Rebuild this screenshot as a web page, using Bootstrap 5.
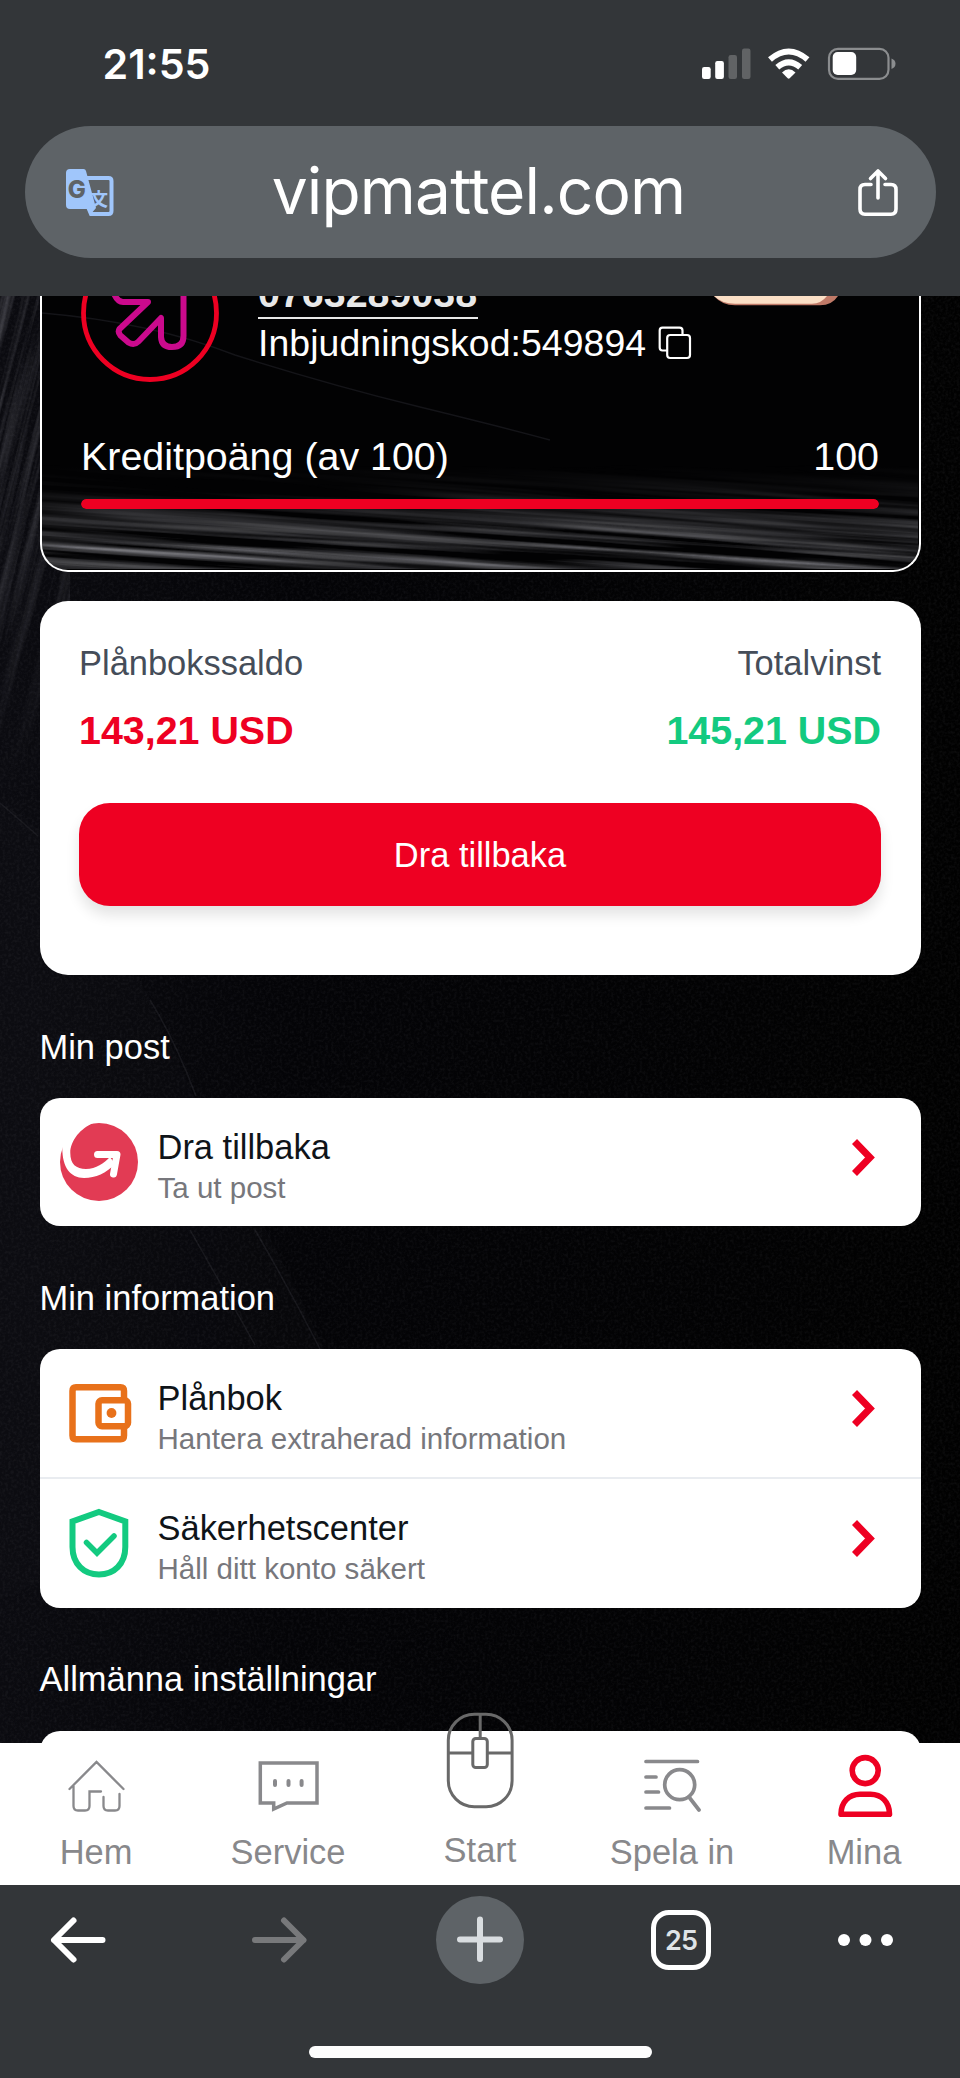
<!DOCTYPE html>
<html lang="sv">
<head>
<meta charset="utf-8">
<meta name="viewport" content="width=device-width, initial-scale=1">
<title>Mina</title>
<link href="https://cdn.jsdelivr.net/npm/bootstrap@5.3.0/dist/css/bootstrap.min.css" rel="stylesheet">
<style>
  :root { --red: #ee0022; --green: #13ca80; --chrome: #333639; --pill: #5e6367; }
  body { width: 960px; height: 2078px; overflow: hidden; background: #020204; font-family: "Liberation Sans", Arial, sans-serif; font-size: 34.46px; }
  svg { display: block; flex: none; }
  .browser-top { height: 296px; background: var(--chrome); font-family: Inter, sans-serif; color: #fff; }
  .status { height: 126px; padding: 44px 64px 0 102.5px; }
  .clock { font-size: 41.2px; line-height: 40px; font-weight: 600; }
  .signals { margin-top: 2px; }
  .url-pill { height: 132px; margin: 0 24.5px; padding: 0 33.5px 0 39.5px; background: var(--pill); border-radius: 66px; }
  .url-text { font-size: 64px; line-height: 80px; letter-spacing: -.85px; padding-bottom: 2px; margin-right: 13px; }
  .page { height: 1447px; padding: 0 39.5px; overflow: hidden; }
  .backdrop { left: 0; top: 0; }
  .profile { height: 275.5px; border: 2.5px solid #fff; border-top: 0; border-radius: 0 0 28px 28px; padding: 0 39.5px; background: #020203; overflow: hidden; color: #fff; }
  .phone { font-size: 39.4px; line-height: 44px; font-weight: 700; margin-top: -25px; padding-bottom: 2px; border-bottom: 2.5px solid #e8e8e8; color: #e8e8e8; width: 220px; }
  .invite { font-size: 37.4px; line-height: 46px; letter-spacing: .07px; padding-top: 1px; }
  .credit { font-size: 39.4px; line-height: 50px; margin-top: 49px; }
  .credit-bar { height: 10px; margin-top: 18px; border-radius: 5px; background: transparent; }
  .credit-bar .progress-bar { background: var(--red); border-radius: 5px; }
  .panel { background: #fff; border: 0; border-radius: 28px; }
  .balance { height: 374px; margin-top: 29.5px; padding: 36.5px 39.5px 0; color: #454d59; line-height: 50px; }
  .amount { font-size: 39.4px; line-height: 50px; font-weight: 700; margin-top: 17px; }
  .btn-draw { height: 103px; margin-top: 48px; padding-top: 9px; border: 0; border-radius: 31px; background: var(--red); color: #fff; font-size: 34.46px; box-shadow: 0 9px 14px rgba(0,0,0,.11); }
  .section-title { color: #fff; font-size: 34.46px; line-height: 50px; font-weight: 400; margin: 46.5px 0 26.5px; }
  .menu-list { border-radius: 20px; overflow: hidden; }
  .menu-row { height: 128px; padding: 0 45px 0 20px; gap: 20px; color: #0f1419; }
  .menu-row + .menu-row { border-top: 2.5px solid #e9ecf0; height: 130.5px; }
  .menu-row .name { line-height: 40px; padding-top: 10px; }
  .menu-row .hint { line-height: 40px; font-size: 29.54px; color: #77777c; padding-top: 1px; }
  .tabs { height: 142px; background: #fff; color: #88888b; z-index: 2; }
  .tabs .tab { width: 192px; line-height: 40px; padding-top: 7px; }
  .tabs .tab span { margin-top: 11.5px; }
  .tabs .tab-start { padding-top: 0; margin-top: -35px; }
  .tabs .tab-start span { margin-top: 9.5px; }
  .browser-bottom { height: 193px; background: var(--chrome); }
  .tools { padding: 11px 66px 0 34px; }
  .tool { width: 88px; height: 88px; }
  .count { width: 60px; height: 60px; border: 5.5px solid #fff; border-radius: 18px; color: #dfe3e6; font: 600 27px/1 Inter, sans-serif; letter-spacing: -.9px; padding-top: 1px; }
  .home-bar { width: 343px; height: 12px; border-radius: 6px; background: #fdfdfd; margin: 62px 308.5px 0; }
</style>
</head>
<body class="d-flex flex-column">

<header class="browser-top">
  <div class="status d-flex justify-content-between align-items-start">
    <div class="clock">21:55</div>
    <svg class="signals" width="194" height="36" viewBox="702 46 194 36">
      <g fill="#fff"><rect x="702" y="67" width="8.7" height="12" rx="2.2"/><rect x="715.2" y="61" width="8.7" height="18" rx="2.2"/></g>
      <g fill="#616365"><rect x="728.5" y="55" width="8.5" height="24" rx="2.2"/><rect x="742" y="48.5" width="8.500" height="30.5" rx="2.2"/></g>
      <g fill="none" stroke="#fff" stroke-width="6"><path d="M770 59.500Q788.700 43.500 807.500 59.500"/><path d="M777.300 67.300Q788.700 57.500 800.200 67.300"/></g>
      <path d="M782 72.500Q788.700 66 795.500 72.500L789.700 78.300Q788.700 79.200 787.700 78.300Z" fill="#fff"/>
      <rect x="829" y="48.800" width="59.500" height="30" rx="9" fill="none" stroke="#8b8d8f" stroke-width="2.200"/>
      <rect x="832.700" y="52" width="23.500" height="23" rx="5" fill="#fff"/>
      <path d="M891.500 58.500Q895.500 60 895.500 63.700T891.500 69Z" fill="#8b8d8f"/>
    </svg>
  </div>
  <div class="url-pill d-flex justify-content-between align-items-center">
    <svg width="52" height="54" viewBox="64 164 52 54">
      <path d="M86 177H108.500Q111.500 177 111.500 180V210Q111.500 213 108.500 213H91L88 206" fill="none" stroke="#a0c6fb" stroke-width="4"/>
      <text x="89.500" y="204.500" font-family="Noto Sans CJK JP, sans-serif" font-weight="700" font-size="18.500" fill="#a0c6fb">文</text>
      <path d="M70 168H83.500Q85.500 168 86 170L96 207L90 214L87.500 208H70Q66 208 66 204V172Q66 168 70 168Z" fill="#a0c6fb"/>
      <path d="M96 203.500L104 203" stroke="#a0c6fb" stroke-width="0"/>
      <text x="67.800" y="196.500" font-family="Inter, sans-serif" font-weight="800" font-size="24" fill="#5e6367">G</text>
    </svg>
    <div class="url-text">vipmattel.com</div>
    <svg width="48" height="54" viewBox="854 165 48 54" fill="none" stroke="#fff" stroke-width="3.600" stroke-linecap="round" stroke-linejoin="round">
      <path d="M871 184.500H865Q860 184.500 860 189.500V209Q860 214.200 865 214.200H891Q896 214.200 896 209V189.500Q896 184.500 891 184.500H885M878 198V172M870.500 178.500L878 171L885.500 178.500"/>
    </svg>
  </div>
</header>

<main class="page position-relative">
  <svg class="backdrop position-absolute" width="960" height="1447" viewBox="0 296 960 1447">
    <defs>
      <filter id="grain" x="0" y="0" width="100%" height="100%"><feTurbulence type="fractalNoise" baseFrequency=".35" numOctaves="2" seed="4"/><feColorMatrix values="0 0 0 0 .4  0 0 0 0 .4  0 0 0 0 .45  .3 0 0 0 -.12"/></filter>
      <filter id="strands" x="0" y="0" width="100%" height="100%"><feTurbulence type="fractalNoise" baseFrequency=".16 .004" numOctaves="3" seed="8"/><feColorMatrix values="0 0 0 0 .3  0 0 0 0 .3  0 0 0 0 .34  1.300 0 0 0 -.5"/></filter>
      <linearGradient id="shade" x1="0" x2="1"><stop offset="0" stop-color="#0b0b10"/><stop offset=".3" stop-color="#040407"/><stop offset="1" stop-color="#010101"/></linearGradient>
      <linearGradient id="fade" x1="0" x2="0" y1="0" y2="1"><stop offset="0" stop-color="#aaa"/><stop offset=".45" stop-color="#888"/><stop offset="1" stop-color="#000"/></linearGradient>
      <mask id="leftmask"><rect x="-100" y="200" width="170" height="600" fill="url(#fade)"/></mask>
    </defs>
    <rect y="296" width="960" height="1447" fill="url(#shade)"/>
    <g mask="url(#leftmask)"><rect x="-100" y="240" width="240" height="560" filter="url(#strands)" transform="rotate(14 20 500)"/></g>
    <path d="M0 803Q70 840 120 940Q175 1050 200 1110Q260 1210 330 1360Q240 1500 0 1600Z" fill="#14141a" opacity=".2"/>
    <path d="M0 803Q20 820 38 836M150 1000Q175 1040 196 1096M190 1230Q230 1300 255 1345M255 1230Q290 1290 320 1349" fill="none" stroke="#26262b" stroke-width="1.500" opacity=".5"/>
    <rect y="296" width="960" height="1447" filter="url(#grain)" opacity=".5"/>
  </svg>

  <section class="profile position-relative">
    <svg class="backdrop position-absolute" width="876" height="273" viewBox="42 296 876 273">
      <defs>
        <filter id="hair" x="0" y="0" width="100%" height="100%"><feTurbulence type="fractalNoise" baseFrequency=".0025 .13" numOctaves="3" seed="12"/><feColorMatrix values="0 0 0 0 .3  0 0 0 0 .3  0 0 0 0 .33  2.200 0 0 0 -.75"/></filter>
        <linearGradient id="rise" x1="0" x2="0" y1="0" y2="1"><stop offset="0" stop-color="#000"/><stop offset=".35" stop-color="#333"/><stop offset=".75" stop-color="#ccc"/><stop offset="1" stop-color="#999"/></linearGradient>
        <mask id="low"><rect x="0" y="465" width="960" height="110" fill="url(#rise)"/></mask>
      </defs>
      <g mask="url(#low)"><rect x="0" y="420" width="1000" height="220" filter="url(#hair)" transform="rotate(4 480 520)"/></g>
      <path d="M42 313Q150 322 235 355Q330 385 420 407T550 440" fill="none" stroke="#141418" stroke-width="1.500"/>
    </svg>
    <div class="position-relative">
      <div class="d-flex justify-content-between align-items-start">
        <div class="d-flex align-items-start">
          <svg width="138" height="86" viewBox="81 296 138 86" fill="none">
            <circle cx="150" cy="313" r="66.500" stroke="#ee0022" stroke-width="4.800"/>
            <path d="M112 288Q116 302 123 302H148L119.500 329Q117.500 332 120.500 335.500L128.500 342.500Q134 346 138.500 341.500L161 318V337Q161.500 347 172 347Q183.500 347 183.500 336V290" stroke="#cb0a8d" stroke-width="6" stroke-linejoin="round"/>
          </svg>
          <div style="margin-left:39px">
            <div class="phone">0763289038</div>
            <div class="invite d-flex align-items-center">Inbjudningskod:549894
              <svg width="38" height="34" viewBox="656 327 38 34" fill="none" stroke="#fff" stroke-width="2.200" style="margin-left:9px">
                <path d="M668 351.500H663.500Q660.700 351.500 660.700 348.500V331.500Q660.700 328.700 663.500 328.700H680.500Q683.500 328.700 683.500 331.500V335"/>
                <rect x="668.200" y="336" width="22.800" height="23" rx="3"/>
              </svg>
            </div>
          </div>
        </div>
        <svg width="165" height="12" viewBox="714 296 165 12">
          <path d="M714 296H838Q832 305.300 820 305.300H735Q722 305.300 714 296Z" fill="#c07a68"/>
          <path d="M714 296H827Q821 303.800 812 303.800H735Q722 303.800 714 296Z" fill="#fbdfc6"/>
        </svg>
      </div>
      <div class="credit d-flex justify-content-between"><span>Kreditpoäng (av 100)</span><span>100</span></div>
      <div class="progress credit-bar"><div class="progress-bar" style="width:100%"></div></div>
    </div>
  </section>

  <section class="card panel balance">
    <div class="d-flex justify-content-between">
      <div>Plånbokssaldo<div class="amount" style="color:var(--red)">143,21 USD</div></div>
      <div class="text-end">Totalvinst<div class="amount" style="color:var(--green)">145,21 USD</div></div>
    </div>
    <button class="btn btn-draw w-100" type="button">Dra tillbaka</button>
  </section>

  <h2 class="section-title position-relative">Min post</h2>
  <div class="card panel menu-list">
    <div class="menu-row d-flex align-items-center">
      <svg width="78" height="78" viewBox="0 0 78 78">
        <circle cx="39" cy="39" r="39" fill="#e23b54"/>
        <path d="M-2-2H40C25 1 10.300 15 10.300 30C10.300 41 16 46 26 46C36 46 44 40 50 34L55 41C46 50 36 55 24 55C10 55 2 44 2.300 24H-2Z" fill="#fff"/>
        <path d="M37.500 31.500H57L53.500 51" fill="none" stroke="#fff" stroke-width="7" stroke-linecap="round" stroke-linejoin="round"/>
      </svg>
      <div class="flex-grow-1"><div class="name">Dra tillbaka</div><div class="hint">Ta ut post</div></div>
      <svg width="24" height="128" viewBox="0 0 24 128"><path d="M2.500 43.500L18 59.500L2.500 75.500" fill="none" stroke="#ee0022" stroke-width="7"/></svg>
    </div>
  </div>

  <h2 class="section-title position-relative">Min information</h2>
  <div class="card panel menu-list">
    <div class="menu-row d-flex align-items-center">
      <svg width="78" height="78" viewBox="0 0 78 78" fill="none" stroke="#e8711a" stroke-width="6.500">
        <path d="M64 25V17Q64 13.200 60.500 13.200H16Q12.500 13.200 12.500 17V61.500Q12.500 65.200 16 65.200H60.500Q64 65.200 64 61.500V53"/>
        <rect x="38.500" y="26.200" width="29.500" height="26" rx="3.500"/>
        <circle cx="51.500" cy="39" r="4.900" fill="#e8711a" stroke="none"/>
      </svg>
      <div class="flex-grow-1"><div class="name">Plånbok</div><div class="hint">Hantera extraherad information</div></div>
      <svg width="24" height="128" viewBox="0 0 24 128"><path d="M2.500 43.500L18 59.500L2.500 75.500" fill="none" stroke="#ee0022" stroke-width="7"/></svg>
    </div>
    <div class="menu-row d-flex align-items-center">
      <svg width="78" height="78" viewBox="0 0 78 78" fill="none" stroke="#13ca80" stroke-width="6">
        <path d="M39 8L65.300 17.300V43C65.300 60 54 70.500 39 70.500S12.500 60 12.500 43V17.300Z"/>
        <path d="M26.500 38.500L37 49L54 32" stroke-width="5.500" stroke-linecap="round"/>
      </svg>
      <div class="flex-grow-1"><div class="name">Säkerhetscenter</div><div class="hint">Håll ditt konto säkert</div></div>
      <svg width="24" height="128" viewBox="0 0 24 128"><path d="M2.500 43.500L18 59.500L2.500 75.500" fill="none" stroke="#ee0022" stroke-width="7"/></svg>
    </div>
  </div>

  <h2 class="section-title position-relative">Allmänna inställningar</h2>
  <div class="card panel menu-list"><div class="menu-row"></div></div>
</main>

<nav class="tabs d-flex align-items-start position-relative">
  <div class="tab d-flex flex-column align-items-center">
    <svg width="72" height="70" viewBox="60 1750 72 70" fill="none" stroke="#89898c" stroke-width="2.300" stroke-linecap="round">
      <path d="M69.500 1789L96.500 1762L123.500 1789M73.500 1786V1806Q73.500 1810.500 78 1810.500H85Q89.500 1810.500 89.500 1806V1791.500H101M103.500 1797V1806Q103.500 1810.500 108 1810.500H115Q119.500 1810.500 119.500 1806V1794"/>
    </svg><span>Hem</span>
  </div>
  <div class="tab d-flex flex-column align-items-center">
    <svg width="72" height="70" viewBox="252 1750 72 70" fill="none" stroke="#89898c">
      <path d="M260.300 1763H317V1803H287L273.700 1809V1803H260.300Z" stroke-width="3.500"/>
      <path d="M275 1781V1785M288.500 1781V1785M301.600 1781V1785" stroke-width="4" stroke-linecap="round"/>
    </svg><span>Service</span>
  </div>
  <div class="tab tab-start d-flex flex-column align-items-center">
    <svg width="80" height="112" viewBox="440 1708 80 112" fill="none" stroke="#696969" stroke-width="3">
      <rect x="448.300" y="1714.300" width="63.800" height="92.500" rx="26"/>
      <rect x="472.800" y="1738.500" width="14.500" height="29" rx="3"/>
      <path d="M480.200 1714V1738M448 1753H472.500M487.500 1753H512"/>
    </svg><span>Start</span>
  </div>
  <div class="tab d-flex flex-column align-items-center">
    <svg width="72" height="70" viewBox="636 1750 72 70" fill="none" stroke="#89898c" stroke-width="3.700" stroke-linecap="round">
      <path d="M646 1761.500H697.500M646 1777H656M646 1792H658.500M646 1808H669.500M689 1797L699 1810"/>
      <circle cx="679.700" cy="1784.700" r="15"/>
    </svg><span>Spela in</span>
  </div>
  <div class="tab d-flex flex-column align-items-center">
    <svg width="72" height="70" viewBox="828 1750 72 70" fill="none" stroke="#ee0022" stroke-width="5.600" stroke-linejoin="round">
      <circle cx="865.200" cy="1770.600" r="13"/>
      <path d="M841 1814.200C841 1802 849 1794.200 860 1794.200H870.500C881.500 1794.200 889.500 1802 889.500 1814.200Z"/>
    </svg><span>Mina</span>
  </div>
</nav>

<footer class="browser-bottom">
  <div class="tools d-flex justify-content-between align-items-center">
    <svg class="tool" viewBox="34 1896 88 88" fill="none" stroke="#fff" stroke-width="6" stroke-linecap="round" stroke-linejoin="round"><path d="M102.500 1940H54L73.500 1920.500M54 1940L73.500 1959.500"/></svg>
    <svg class="tool" viewBox="235 1896 88 88" fill="none" stroke="#78797b" stroke-width="6" stroke-linecap="round" stroke-linejoin="round"><path d="M255 1940H303.500L284 1920.500M303.500 1940L284 1959.500"/></svg>
    <svg class="tool" viewBox="436 1896 88 88" fill="none" stroke="#d9dde0" stroke-width="6" stroke-linecap="round"><circle cx="480" cy="1940" r="44" fill="#5e6367" stroke="none"/><path d="M460 1939.500H500M480 1919.500V1959"/></svg>
    <div class="tool d-flex align-items-center justify-content-center"><div class="count d-flex align-items-center justify-content-center">25</div></div>
    <svg width="56" height="88" viewBox="836 1896 56 88" fill="#fff"><circle cx="842" cy="1940" r="6"/><circle cx="863.500" cy="1940" r="6"/><circle cx="885" cy="1940" r="6"/></svg>
  </div>
  <div class="home-bar"></div>
</footer>

<script src="https://cdn.jsdelivr.net/npm/bootstrap@5.3.0/dist/js/bootstrap.bundle.min.js"></script>
</body>
</html>
